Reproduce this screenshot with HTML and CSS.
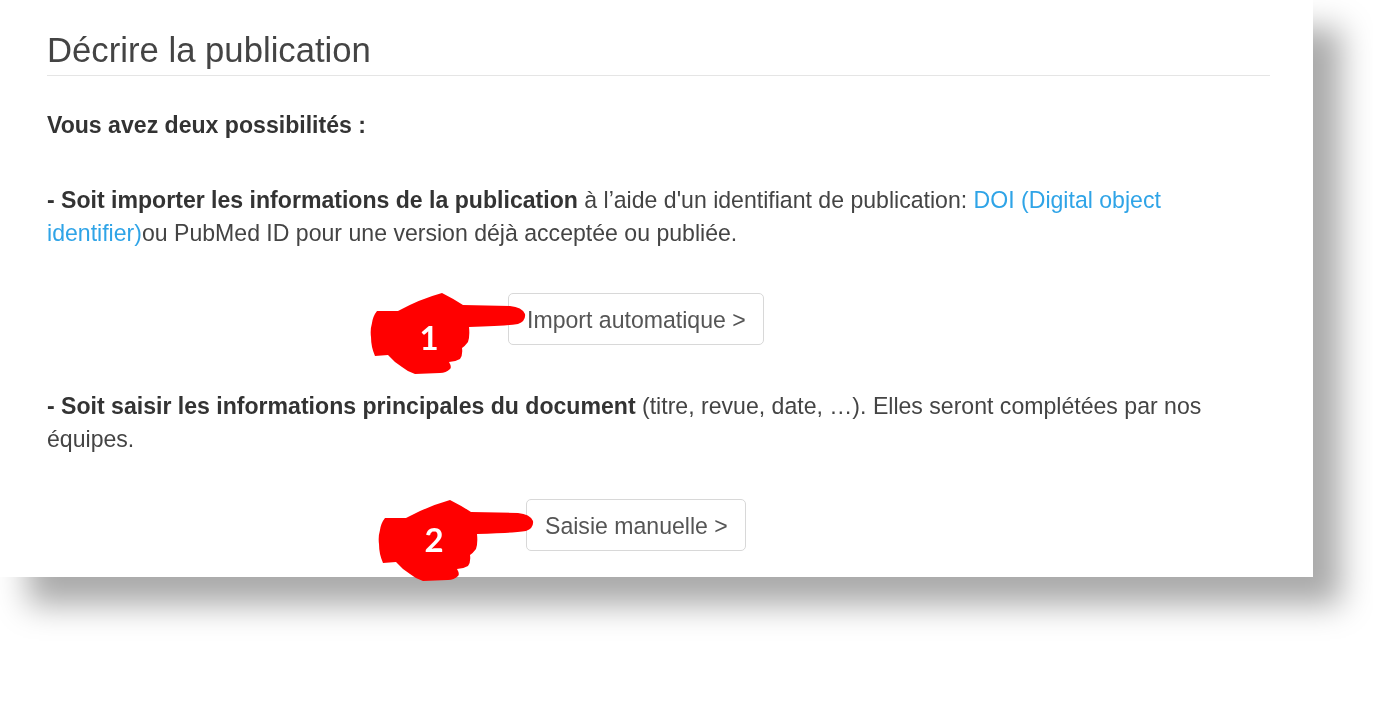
FILE: index.html
```html
<!DOCTYPE html>
<html lang="fr">
<head>
    <meta charset="UTF-8">
    <meta name="viewport" content="width=device-width, initial-scale=1.0">
    <title>Décrire la publication</title>
    <link rel="stylesheet" href="styles.css">
</head>
<body>
    <div class="card">
        <h1 class="page-title">Décrire la publication</h1>

        <p class="intro"><strong>Vous avez deux possibilités :</strong></p>

        <p class="choice"><strong>- Soit importer les informations de la publication</strong> à l’aide d'un identifiant de publication: <a href="#">DOI (Digital object identifier)</a>ou PubMed ID pour une version déjà acceptée ou publiée.</p>

        <div class="action action-import">
            <a class="btn" href="#">Import automatique &gt;</a>
            <svg class="hand" viewBox="0 0 157 83">
                <path class="hand-shape" d="M72 1 Q84 7 93 13 L140 14 Q152 15 155 22 Q156 29 148 32 Q135 34 99 35 Q100 44 98 50 Q95 54 92 56 Q93 63 90 67 Q85 70 79 70 Q82 75 80 77 Q76 81 70 81 L45 82 Q38 80 32 75 Q24 70 18 63 L5 64 Q1 55 1 45 Q0 38 2 31 Q3 24 7 19 L28 19 Q50 7 72 1 Z"/>
                <text class="hand-num" x="59" y="58">1</text>
            </svg>
        </div>

        <p class="choice"><strong>- Soit saisir les informations principales du document</strong> (titre, revue, date, …). Elles seront complétées par nos équipes.</p>

        <div class="action action-manual">
            <a class="btn" href="#">Saisie manuelle &gt;</a>
            <svg class="hand" viewBox="0 0 157 83">
                <path class="hand-shape" d="M72 1 Q84 7 93 13 L140 14 Q152 15 155 22 Q156 29 148 32 Q135 34 99 35 Q100 44 98 50 Q95 54 92 56 Q93 63 90 67 Q85 70 79 70 Q82 75 80 77 Q76 81 70 81 L45 82 Q38 80 32 75 Q24 70 18 63 L5 64 Q1 55 1 45 Q0 38 2 31 Q3 24 7 19 L28 19 Q50 7 72 1 Z"/>
                <text class="hand-num" x="56" y="53">2</text>
            </svg>
        </div>
    </div>
</body>
</html>
```

FILE: styles.css
```css
html, body {
    height: 100%;
}

body {
    margin: 0;
    background: white;
    font-family: 'Liberation Sans', Arial, sans-serif;
    font-size: 23.08px;
    line-height: 33px;
    color: #444;
}

.card {
    box-sizing: border-box;
    width: 1313px;
    height: 577px;
    padding: 28px 43px 0 47px;
    background: white;
    box-shadow: 28px 28px 30px #aaa;
    filter: blur(0.35px);
}

.page-title {
    margin: 0 0 33px;
    padding-bottom: 3px;
    border-bottom: 1px solid #e5e5e5;
    font-size: 34.7px;
    font-weight: normal;
    line-height: 44px;
    color: #444;
}

.intro {
    margin: 0 0 42px;
}

.choice {
    margin: 0;
}

.choice a {
    color: #2fa4e7;
    text-decoration: none;
}

strong {
    color: #333;
}

.action {
    position: relative;
    width: fit-content;
}

.action-import {
    margin: 43px 0 45px 461px;
}

.action-manual {
    margin: 43px 0 0 479px;
}

.btn {
    display: block;
    padding: 0 17.5px 0 18px;
    height: 50px;
    line-height: 52px;
    border: 1.5px solid #d8d8d8;
    border-radius: 5px;
    color: #555;
    text-decoration: none;
}

.hand {
    position: absolute;
    top: -1px;
    left: -138px;
    width: 157px;
    height: 83px;
}

.action-manual .hand {
    top: 0;
    left: -148px;
}

.hand-shape {
    fill: #f00;
}

.hand-num {
    font-family: Lato, sans-serif;
    font-size: 33px;
    font-weight: bold;
    fill: white;
    text-anchor: middle;
}
```
